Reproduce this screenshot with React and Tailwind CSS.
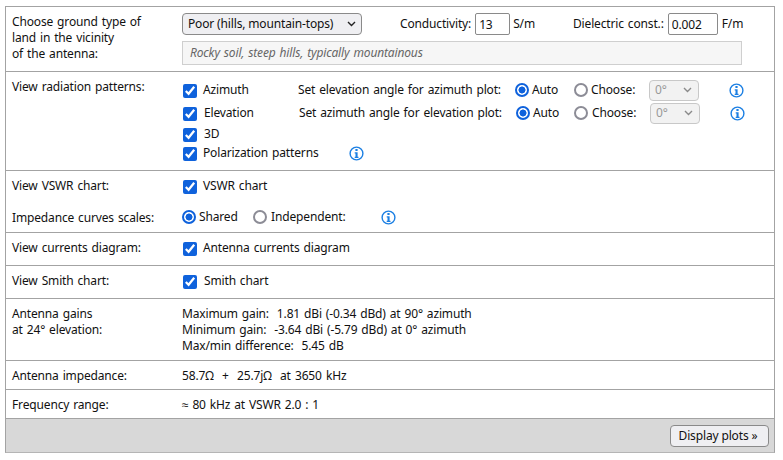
const font = { fontFamily: '"Noto Sans", sans-serif' };

function Info({ className = "" }) {
  return (
    <svg width="15" height="15" viewBox="0 0 15 15" className={"shrink-0 " + className}>
      <circle cx="7.5" cy="7.5" r="6.4" fill="none" stroke="#1b7fe3" strokeWidth="1.4" />
      <rect x="6.4" y="3" width="2.2" height="2" fill="#1b7fe3" />
      <path d="M5.7 6.2H8.6V10.8H9.5V12H5.7V10.8H6.5V7.4H5.7Z" fill="#1b7fe3" />
    </svg>
  );
}

function Check({ label, gap = "ml-[6px]", className = "" }) {
  return (
    <label className={"flex items-center " + className}>
      <input type="checkbox" defaultChecked className="relative top-[1px] w-3.5 h-3.5 m-0 accent-[#0f62dc] shrink-0" />
      <span className={gap}>{label}</span>
    </label>
  );
}

function Radio({ label, checked, name, gap = "ml-[3px]", className = "" }) {
  return (
    <label className={"flex items-center " + className}>
      <input
        type="radio"
        name={name}
        defaultChecked={checked}
        className="appearance-none w-3.5 h-3.5 m-0 shrink-0 rounded-full border-2 border-[#8c8c96] bg-white checked:border-[#0f62dc] checked:bg-[radial-gradient(circle,#0f62dc_0,#0f62dc_3.2px,#ffffff_3.8px)]"
      />
      <span className={gap}>{label}</span>
    </label>
  );
}

function Row({ label, children, className = "" }) {
  return (
    <div className={"flex border-t border-[#a3a3a3] first:border-t-0 " + className}>
      <div className="w-[176px] shrink-0 pl-[6px]">{label}</div>
      <div className="flex-1 min-w-0">{children}</div>
    </div>
  );
}

function Chevron({ color, className = "" }) {
  return (
    <svg width="9" height="6" viewBox="0 0 9 6" className={"absolute top-1/2 -translate-y-1/2 pointer-events-none " + className}>
      <path d="M1 1L4.5 4.5L8 1" fill="none" stroke={color} strokeWidth="1.4" />
    </svg>
  );
}

function AngleRow({ text, name, offset }) {
  return (
    <div className={"flex items-center " + (offset ? "h-[22px]" : "h-[24px]")}>
      <Check label={text[0]} gap={offset ? "ml-[7px]" : "ml-[6px]"} className={"ml-px " + (offset ? "w-[116px]" : "w-[115px]")} />
      <span className="w-[217px] shrink-0">{text[1]}</span>
      <Radio label="Auto" name={name} checked className={offset ? "w-[58px]" : "w-[59px]"} />
      <Radio label="Choose:" name={name} gap={offset ? "ml-[4px]" : "ml-[3px]"} className={offset ? "w-[76px]" : "w-[75px]"} />
      <div className="relative w-[50px] h-[21px] shrink-0">
        <select disabled className="appearance-none w-full h-full border border-[#c8c8c8] rounded-[4px] bg-[#f2f2f2] text-[#999] pl-[5px] text-[12px]">
          <option>0°</option>
        </select>
        <Chevron color="#8a8a8a" className="right-[7px]" />
      </div>
      <Info className="ml-[30px]" />
    </div>
  );
}

export default function App() {
  return (
    <div style={font} className="w-[783px] h-[460px] bg-white text-[12px] leading-[16px] text-[#111] tracking-[-0.15px] [word-spacing:1px] pt-[6px] pl-[5px]">
      <div className="w-[770px] border border-[#a3a3a3] border-b-[#b5b5b5]">
        <Row label={<div className="pt-[7px]">Choose ground type of<br />land in the vicinity<br />of the antenna:</div>} className="h-[64px]">
          <div className="pt-[6px]">
            <div className="flex items-center h-[22px]">
              <div className="relative w-[180px] h-[22px] shrink-0">
                <select className="appearance-none w-full h-full border border-[#8a8a8a] rounded-[4px] bg-[#efeff2] pl-[5px] text-[12px]">
                  <option>Poor (hills, mountain-tops)</option>
                </select>
                <Chevron color="#222" className="right-[6px]" />
              </div>
              <span className="ml-[38px]">Conductivity:</span>
              <input readOnly value="13" className="w-[35px] h-[22px] ml-[4px] border border-[#8a8a8a] rounded-[2px] px-[3px] text-[12px]" />
              <span className="ml-[3px]">S/m</span>
              <span className="ml-[38px]">Dielectric const.:</span>
              <input readOnly value="0.002" className="w-[50px] h-[22px] ml-[4px] border border-[#8a8a8a] rounded-[2px] px-[3px] text-[12px]" />
              <span className="ml-[4px]">F/m</span>
            </div>
            <div className="mt-[6px] w-[560px] h-[24px] border border-[#cfcfcf] bg-[#f6f6f6] italic text-[#666] px-[7px] flex items-center">
              Rocky soil, steep hills, typically mountainous
            </div>
          </div>
        </Row>
        <Row label={<div className="pt-[7px]">View radiation patterns:</div>} className="h-[99px]">
          <div className="pt-[6px]">
            <AngleRow text={["Azimuth", "Set elevation angle for azimuth plot:"]} name="az" />
            <AngleRow text={["Elevation", "Set azimuth angle for elevation plot:"]} name="el" offset />
            <Check label="3D" gap="ml-[7px]" className="ml-px h-[19px]" />
            <div className="flex items-center h-[20px]">
              <Check label="Polarization patterns" gap="ml-[6px]" className="ml-px w-[166px]" />
              <Info />
            </div>
          </div>
        </Row>
        <Row label={<div className="pt-[7px]">View VSWR chart:<div className="mt-[16px]">Impedance curves scales:</div></div>} className="h-[62px]">
          <div className="pt-[5px]">
            <Check label="VSWR chart" className="ml-px h-[19px]" />
            <div className="flex items-center h-[20px] mt-[12px]">
              <Radio label="Shared" name="imp" checked className="w-[71px]" />
              <Radio label="Independent:" name="imp" gap="ml-[4px]" className="w-[128px]" />
              <Info />
            </div>
          </div>
        </Row>
        <Row label={<div className="pt-[7px]">View currents diagram:</div>} className="h-[33px]">
          <Check label="Antenna currents diagram" className="ml-px h-[30px]" />
        </Row>
        <Row label={<div className="pt-[7px]">View Smith chart:</div>} className="h-[33px]">
          <Check label="Smith chart" gap="ml-[7px]" className="ml-px h-[30px]" />
        </Row>
        <Row label={<div className="pt-[7px]">Antenna gains<br />at 24° elevation:</div>} className="h-[62px]">
          <div className="pt-[7px] whitespace-pre">
            <div>Maximum gain:  1.81 dBi (-0.34 dBd) at 90° azimuth</div>
            <div>Minimum gain:  -3.64 dBi (-5.79 dBd) at 0° azimuth</div>
            <div>Max/min difference:  5.45 dB</div>
          </div>
        </Row>
        <Row label={<div className="pt-[7px]">Antenna impedance:</div>} className="h-[29px]">
          <div className="pt-[7px] whitespace-pre [word-spacing:1.2px]">58.7Ω  +  25.7jΩ  at 3650 kHz</div>
        </Row>
        <Row label={<div className="pt-[7px]">Frequency range:</div>} className="h-[29px]">
          <div className="pt-[7px]">≈ 80 kHz at VSWR 2.0 : 1</div>
        </Row>
        <div className="h-[34px] bg-[#d8d8d8] border-t border-[#a3a3a3] flex items-center justify-end pr-[5px]">
          <button className="h-[22px] w-[99px] border border-[#8a8a8a] rounded-[4px] bg-[#efeff2] text-[12px] pr-[3px]">Display plots »</button>
        </div>
      </div>
    </div>
  );
}
